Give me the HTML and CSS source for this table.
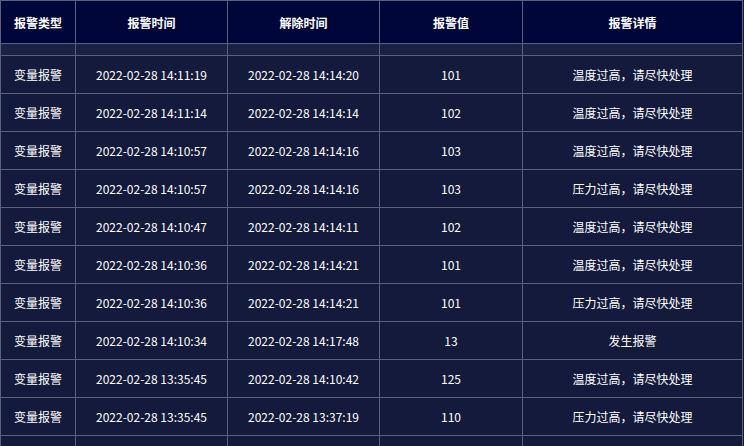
FILE: index.html
```html
<!DOCTYPE html>
<html lang="en">
<head>
  <meta charset="UTF-8">
  <title>报警记录</title>
  <link rel="stylesheet" href="styles.css">
</head>
<body>
  <table class="alarm-table">
    <colgroup>
      <col class="c-type"><col class="c-time"><col class="c-time"><col class="c-val"><col class="c-detail">
    </colgroup>
    <thead>
      <tr><th>报警类型</th><th>报警时间</th><th>解除时间</th><th>报警值</th><th>报警详情</th></tr>
    </thead>
    <tbody>
      <tr class="spacer"><td></td><td></td><td></td><td></td><td></td></tr>
      <tr><td>变量报警</td><td>2022-02-28 14:11:19</td><td>2022-02-28 14:14:20</td><td>101</td><td>温度过高，请尽快处理</td></tr>
      <tr><td>变量报警</td><td>2022-02-28 14:11:14</td><td>2022-02-28 14:14:14</td><td>102</td><td>温度过高，请尽快处理</td></tr>
      <tr><td>变量报警</td><td>2022-02-28 14:10:57</td><td>2022-02-28 14:14:16</td><td>103</td><td>温度过高，请尽快处理</td></tr>
      <tr><td>变量报警</td><td>2022-02-28 14:10:57</td><td>2022-02-28 14:14:16</td><td>103</td><td>压力过高，请尽快处理</td></tr>
      <tr><td>变量报警</td><td>2022-02-28 14:10:47</td><td>2022-02-28 14:14:11</td><td>102</td><td>温度过高，请尽快处理</td></tr>
      <tr><td>变量报警</td><td>2022-02-28 14:10:36</td><td>2022-02-28 14:14:21</td><td>101</td><td>温度过高，请尽快处理</td></tr>
      <tr><td>变量报警</td><td>2022-02-28 14:10:36</td><td>2022-02-28 14:14:21</td><td>101</td><td>压力过高，请尽快处理</td></tr>
      <tr><td>变量报警</td><td>2022-02-28 14:10:34</td><td>2022-02-28 14:17:48</td><td>13</td><td>发生报警</td></tr>
      <tr><td>变量报警</td><td>2022-02-28 13:35:45</td><td>2022-02-28 14:10:42</td><td>125</td><td>温度过高，请尽快处理</td></tr>
      <tr><td>变量报警</td><td>2022-02-28 13:35:45</td><td>2022-02-28 13:37:19</td><td>110</td><td>压力过高，请尽快处理</td></tr>
      <tr class="partial"><td></td><td></td><td></td><td></td><td></td></tr>
    </tbody>
  </table>
</body>
</html>
```

FILE: styles.css
```css
html, body { margin: 0; padding: 0; height: 100%; overflow: hidden; background-color: #121936; }
body { font-family: "Noto Sans CJK SC", "Noto Sans", sans-serif; font-size: 12px; color: #ffffff; }
.alarm-table { width: 743px; border-collapse: collapse; table-layout: fixed; background-color: #131a3b; }
.c-type { width: 75px; }
.c-time { width: 152px; }
.c-val { width: 143px; }
.alarm-table th, .alarm-table td { border: 1px solid #59617f; text-align: center; padding: 0; white-space: nowrap; overflow: hidden; }
.alarm-table th { height: 42px; background-color: #00063a; font-weight: bold; }
.alarm-table td { height: 37px; }
.alarm-table .spacer td { height: 11px; background-color: #1a2142; }
```
